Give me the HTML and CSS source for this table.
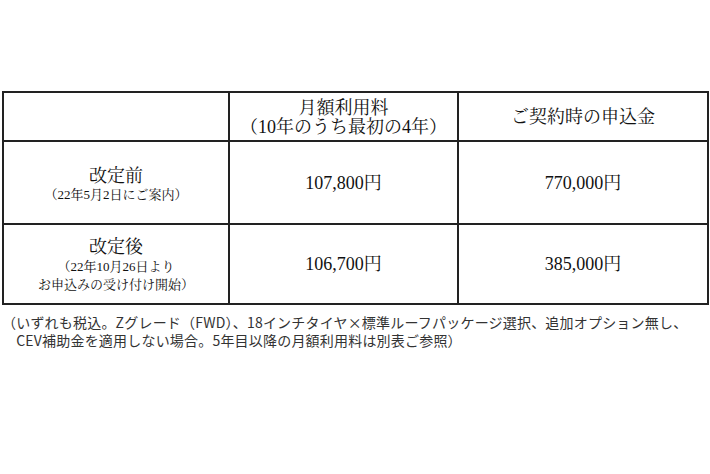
FILE: index.html
```html
<!DOCTYPE html>
<html lang="ja">
<head>
<meta charset="utf-8">
<link rel="stylesheet" href="styles.css">
</head>
<body>
<div class="page">
  <table class="price">
    <colgroup>
      <col class="c1"><col class="c2"><col class="c3">
    </colgroup>
    <tr class="r-head">
      <td></td>
      <td><div class="main">月額利用料</div><div class="main">（10年のうち最初の4年）</div></td>
      <td><div class="main">ご契約時の申込金</div></td>
    </tr>
    <tr class="r-before">
      <td><div class="main">改定前</div><div class="sub">（22年5月2日にご案内）</div></td>
      <td><div class="main">107,800円</div></td>
      <td><div class="main">770,000円</div></td>
    </tr>
    <tr class="r-after">
      <td><div class="main">改定後</div><div class="sub">（22年10月26日より</div><div class="sub">お申込みの受け付け開始）</div></td>
      <td><div class="main">106,700円</div></td>
      <td><div class="main">385,000円</div></td>
    </tr>
  </table>
  <div class="note">
    <div class="note-line">（いずれも税込。Zグレード（FWD）、18インチタイヤ×標準ルーフパッケージ選択、追加オプション無し、</div>
    <div class="note-line">　CEV補助金を適用しない場合。5年目以降の月額利用料は別表ご参照）</div>
  </div>
</div>
</body>
</html>
```
FILE: styles.css
```css
html, body {
  margin: 0;
  padding: 0;
  background: #ffffff;
}
.page {
  padding-top: 91px;
  padding-left: 2px;
}
.price {
  border-collapse: collapse;
  table-layout: fixed;
  width: 705px;
  font-family: "Liberation Serif", "Noto Serif CJK JP", "IPAMincho", "Noto Sans CJK JP", serif;
  color: #111111;
}
.c1 { width: 226px; }
.c2 { width: 229px; }
.c3 { width: 250px; }
.price td {
  border: 2px solid #222222;
  padding: 0;
  text-align: center;
  vertical-align: middle;
}
.r-head { height: 49px; }
.r-head td { padding-top: 2px; }
.r-before { height: 83px; }
.r-before td:first-child { padding-top: 4px; }
.r-after { height: 80px; }
.r-after td:first-child { padding-top: 2px; }
.main {
  font-size: 18px;
  line-height: 22px;
}
.r-head .main { line-height: 19px; }
.r-before .main { line-height: 20px; }
.sub {
  font-size: 13px;
  line-height: 18px;
}
.note {
  margin-top: 8px;
  font-family: "Noto Sans CJK JP", sans-serif;
  font-size: 14px;
  letter-spacing: 0.2px;
  color: #333333;
  white-space: nowrap;
}
.note-line {
  line-height: 18px;
}
```
